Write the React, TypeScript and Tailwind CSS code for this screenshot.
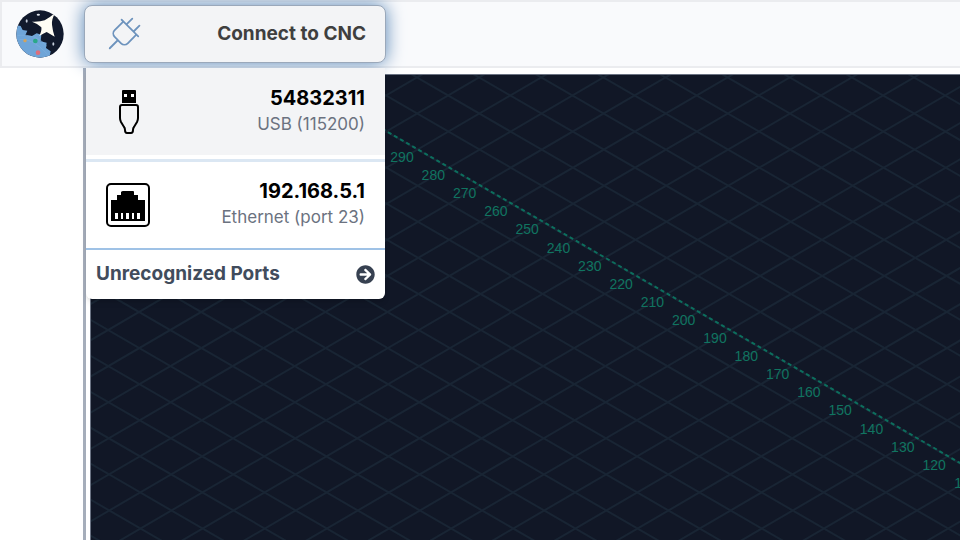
import { FaArrowCircleRight } from "react-icons/fa";
import { PiPlugLight } from "react-icons/pi";
import type { ReactNode } from "react";

interface Port {
  name: string;
  detail: string;
  icon: ReactNode;
  active?: boolean;
}

const ports: Port[] = [
  { name: "54832311", detail: "USB (115200)", icon: <UsbIcon />, active: true },
  { name: "192.168.5.1", detail: "Ethernet (port 23)", icon: <EthernetIcon /> },
];

export default function App() {
  return (
    <div className="flex h-screen flex-col overflow-hidden bg-white font-['Inter',sans-serif]">
      <header className="relative z-10 flex h-[68px] shrink-0 items-center gap-5 border-2 border-r-0 border-[#ebecef] bg-[#f9fafc] pl-3.5">
        <Logo />
        <ConnectMenu />
      </header>

      <main className="flex min-h-0 flex-1">
        <aside className="w-[83px] shrink-0" />
        <section className="flex flex-1 border-l-3 border-[#a5adba] pt-1.5 pl-1">
          <div className="flex-1 border-t border-l border-gray-500 bg-[#111726]">
            <Visualizer />
          </div>
        </section>
      </main>
    </div>
  );
}

function ConnectMenu() {
  return (
    <div className="relative w-[302px]">
      <button
        type="button"
        className="flex h-[58px] w-full items-center justify-between rounded-lg border border-[#9aa8ba] bg-[#f3f4f6] pr-[19px] pl-5 text-[19px] font-bold text-[#3f3f3f] shadow-[0_0_18px_#5684b5]"
      >
        <PiPlugLight size={38} className="text-[#6d93bd]" />
        Connect to CNC
      </button>

      {/* Port list */}
      <div className="absolute top-full right-px left-0.5 mt-[5px] overflow-hidden rounded-b-md bg-white shadow-md">
        {ports.map((port) => (
          <PortRow key={port.name} port={port} />
        ))}
        <button
          type="button"
          className="flex h-[51px] w-full items-center justify-between border-t-2 border-[#9fc2e6] px-2.5 text-[19px] font-bold text-[#414c5c]"
        >
          Unrecognized Ports
          <FaArrowCircleRight size={19} className="text-[#374151]" />
        </button>
      </div>
    </div>
  );
}

function PortRow({ port }: { port: Port }) {
  return (
    <button
      type="button"
      className={`flex w-full items-center justify-between px-5 ${
        port.active
          ? "h-[94px] border-b-3 border-[#dbe7f3] bg-[linear-gradient(#f3f4f6_87px,#fff_87px)] pb-1"
          : "h-[86px]"
      }`}
    >
      {port.icon}
      <span className="flex flex-col pb-1 text-right">
        <span className="text-xl leading-7 font-bold text-black">{port.name}</span>
        <span className="text-[17px] leading-6 text-[#6b7280]">{port.detail}</span>
      </span>
    </button>
  );
}

// ===== VISUALIZER =====
// Isometric grid: one cell is about 62 wide and 36 high
const CELL = 62.13;
const gridLines = Array.from({ length: 48 }, (_, i) => 48 + (i - 10) * CELL);
const axisMarks = Array.from({ length: 19 }, (_, i) => 290 - i * 10);

function Visualizer() {
  return (
    <svg className="block h-full w-full" role="img" aria-label="Toolpath grid">
      <g stroke="#192534" strokeWidth="2">
        {gridLines.map((x) => (
          <g key={x}>
            <line x1={x - 624} y1={-124} x2={x + 624} y2={598} />
            <line x1={x + 619} y1={-124} x2={x - 619} y2={598} />
          </g>
        ))}
      </g>
      <line
        x1="200"
        y1="1"
        x2="1450"
        y2="724"
        stroke="#0c6e5d"
        strokeWidth="2"
        strokeDasharray="4 3"
      />
      <g fill="#107460" fontSize="14" fontFamily="Liberation Sans, sans-serif" textAnchor="middle">
        {axisMarks.map((mark, i) => (
          <text key={mark} x={311 + i * 31.3} y={87 + i * 18.1}>
            {mark}
          </text>
        ))}
      </g>
    </svg>
  );
}

// ===== ICONS =====
function Logo() {
  return (
    <svg viewBox="0 0 144 144" className="size-12 shrink-0" role="img" aria-label="Logo">
      <clipPath id="logo-disc">
        <circle cx="72" cy="72" r="71" />
      </clipPath>
      <g clipPath="url(#logo-disc)">
        <rect width="144" height="144" fill="#11192c" />
        <path
          d="M0 45L14 48L20 60L34 62L28 76L48 78L62 70L76 74L74 94L92 98L90 114L104 124L100 144H0Z"
          fill="#6fa5d8"
        />
        <path
          d="M10 88Q50 84 94 132M4 76Q60 70 92 108"
          stroke="#7fb0de"
          strokeWidth="2"
          fill="none"
        />
        <path
          d="M118 8Q106 28 108 44Q110 62 116 80L92 66Q82 70 70 78Q78 62 76 52Q64 40 48 35Q72 36 86 31Q104 20 118 8Z"
          fill="#fffdf4"
        />
        <circle cx="27" cy="92" r="5" fill="#d2a35c" />
        <circle cx="58" cy="93" r="7" fill="#2aa888" />
        <circle cx="66" cy="128" r="7" fill="#dd6f7c" />
        <ellipse cx="67" cy="14" rx="5" ry="3" fill="#dfe4ec" />
        <ellipse cx="32" cy="33" rx="3" ry="5" fill="#c2cbd8" />
        <ellipse cx="112" cy="102" rx="3" ry="5" fill="#c2cbd8" />
      </g>
    </svg>
  );
}

function UsbIcon() {
  return (
    <svg viewBox="0 0 44 44" className="size-11" aria-hidden="true">
      <path d="M17 0H29Q30 0 30 1V13H16V1Q16 0 17 0Z" fill="#000" />
      <path d="M18 4h3v3h-3zM25 4h3v3h-3z" fill="#fff" />
      <path
        d="M16 15H30Q32 15 32 17V28Q32 30 31 32L28 37Q27 38 27 40Q27 43 25 43H21Q19 43 19 40Q19 38 18 37L15 32Q14 30 14 28V17Q14 15 16 15Z"
        fill="none"
        stroke="#000"
        strokeWidth="2"
      />
    </svg>
  );
}

function EthernetIcon() {
  return (
    <svg viewBox="0 0 44 44" className="size-11" aria-hidden="true">
      <rect x="1" y="1" width="42" height="42" rx="4" fill="none" stroke="#000" strokeWidth="2" />
      <path d="M5 38V17H11V12H15V9Q16 8 17 8H27Q28 8 28 9V12H32V17H39V38Z" fill="#000" />
      <path d="M9 30h3v6h-3zM15 30h2v6h-2zM20 30h3v6h-3zM26 30h2v6h-2zM31 30h3v6h-3z" fill="#fff" />
    </svg>
  );
}
